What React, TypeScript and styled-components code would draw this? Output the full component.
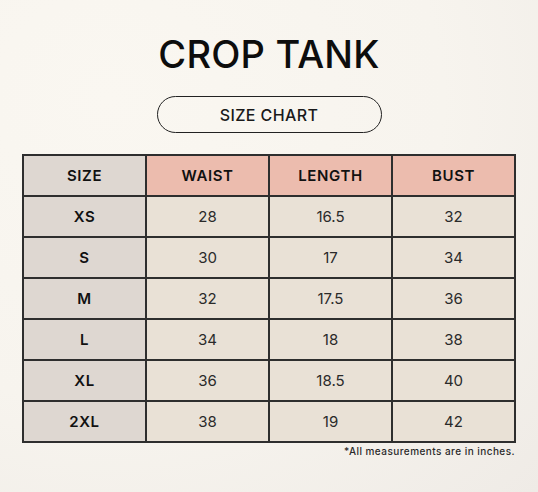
import React from 'react';
import styled, { createGlobalStyle } from 'styled-components';

const GlobalStyle = createGlobalStyle`
  html, body {
    margin: 0;
    padding: 0;
  }
  body {
    font-family: Inter, 'Liberation Sans', Arial, sans-serif;
    color: #111;
  }
`;

const Page = styled.div`
  width: 538px;
  height: 492px;
  box-sizing: border-box;
  padding-top: 35px;
  display: flex;
  flex-direction: column;
  align-items: center;
  background: radial-gradient(
    ellipse at 20% 20%,
    #faf7f1 0%,
    #f7f4ee 55%,
    #efebe6 100%
  );
`;

const Title = styled.h1`
  margin: 0;
  font-size: 38px;
  line-height: 38px;
  font-weight: 500;
  letter-spacing: 0.2px;
  color: #0d0d0d;
`;

const Pill = styled.div`
  margin-top: 23px;
  width: 225px;
  height: 37px;
  box-sizing: border-box;
  border: 1.5px solid #222;
  border-radius: 19px;
  display: flex;
  align-items: center;
  justify-content: center;
  font-size: 16px;
  font-weight: 500;
  letter-spacing: 0.4px;
  color: #1a1a1a;
`;

const Table = styled.table`
  margin-top: 21px;
  border-collapse: collapse;
  border: 2px solid #3a3a3a;
  table-layout: fixed;
`;

type CellProps = {
  $tone: 'label' | 'accent' | 'body';
};

const tones = {
  label: '#ded7d1',
  accent: '#ecbcae',
  body: '#e9e1d6',
};

const Cell = styled.td<CellProps>`
  width: 121px;
  height: 39px;
  padding: 0;
  border: 2px solid #2e2e2e;
  text-align: center;
  vertical-align: middle;
  font-size: 15px;
  background: ${(p) => tones[p.$tone]};
  font-weight: ${(p) => (p.$tone === 'body' ? 400 : 600)};
  letter-spacing: ${(p) => (p.$tone === 'body' ? '0' : '0.6px')};
  color: ${(p) => (p.$tone === 'body' ? '#2a2a2a' : '#111')};
`;

const Note = styled.div`
  align-self: flex-end;
  margin: 2px 23px 0 0;
  font-size: 10px;
  font-weight: 500;
  letter-spacing: 0.45px;
  color: #2a2a2a;
`;

const rows = [
  ['XS', '28', '16.5', '32'],
  ['S', '30', '17', '34'],
  ['M', '32', '17.5', '36'],
  ['L', '34', '18', '38'],
  ['XL', '36', '18.5', '40'],
  ['2XL', '38', '19', '42'],
];

export default function App() {
  return (
    <>
      <GlobalStyle />
      <Page>
        <Title>CROP TANK</Title>
        <Pill>SIZE CHART</Pill>
        <Table>
          <thead>
            <tr>
              <Cell as="th" $tone="label">SIZE</Cell>
              <Cell as="th" $tone="accent">WAIST</Cell>
              <Cell as="th" $tone="accent">LENGTH</Cell>
              <Cell as="th" $tone="accent">BUST</Cell>
            </tr>
          </thead>
          <tbody>
            {rows.map(([size, ...vals]) => (
              <tr key={size}>
                <Cell $tone="label">{size}</Cell>
                {vals.map((v, i) => (
                  <Cell key={i} $tone="body">{v}</Cell>
                ))}
              </tr>
            ))}
          </tbody>
        </Table>
        <Note>*All measurements are in inches.</Note>
      </Page>
    </>
  );
}
